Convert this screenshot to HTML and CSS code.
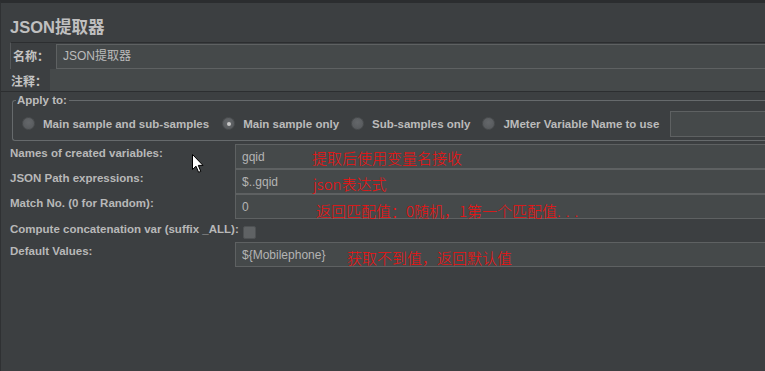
FILE: index.html
```html
<!DOCTYPE html>
<html>
<head>
<meta charset="utf-8">
<link rel="stylesheet" href="styles.css">
</head>
<body>
<div class="app">
  <h1 class="title">JSON提取器</h1>
  <div class="name-row">
    <span class="cjk-label">名称：</span>
    <div class="name-field">JSON提取器</div>
  </div>
  <div class="comment-row">
    <span class="cjk-label">注释：</span>
    <div class="comment-field"></div>
  </div>
  <fieldset class="apply">
    <legend>Apply to:</legend>
    <div class="radios">
      <label class="radio r1"><span class="dot"></span>Main sample and sub-samples</label>
      <label class="radio r2"><span class="dot on"></span>Main sample only</label>
      <label class="radio r3"><span class="dot"></span>Sub-samples only</label>
      <label class="radio r4"><span class="dot"></span>JMeter Variable Name to use</label>
      <div class="var-field"></div>
    </div>
  </fieldset>
  <div class="form">
    <div class="lbl">Names of created variables:</div>
    <div class="field"><span class="val v1">gqid</span><span class="note n1">提取后使用变量名接收</span></div>
    <div class="lbl">JSON Path expressions:</div>
    <div class="field"><span class="val v2">$..gqid</span><span class="note n2">json表达式</span></div>
    <div class="lbl">Match No. (0 for Random):</div>
    <div class="field"><span class="val v3">0</span><span class="note n3">返回匹配值：0随机，1第一个匹配值<span class="dots">...</span></span></div>
    <div class="check-row"><span class="lbl-inline">Compute concatenation var (suffix _ALL):</span><span class="checkbox"></span></div>
    <div class="lbl">Default Values:</div>
    <div class="field"><span class="val v5">${Mobilephone}</span><span class="note n5">获取不到值，返回默认值</span></div>
  </div>
  <svg class="cursor" width="13" height="20" viewBox="0 0 13 20">
    <path d="M0.5 0.5 L0.5 15.5 L4 12.2 L6.6 18.3 L8.8 17.4 L6.3 11.4 L11 11.4 Z" fill="#ffffff" stroke="#000000" stroke-width="1"/>
  </svg>
</div>
</body>
</html>
```

FILE: styles.css
```css
* { box-sizing: border-box; }
html, body { margin: 0; padding: 0; }
body {
  width: 765px;
  height: 371px;
  overflow: hidden;
  background: #3c3f41;
  font-family: "Liberation Sans", Arial, "Noto Sans CJK SC", sans-serif;
  color: #bbbbbb;
}
.app {
  position: relative;
  width: 765px;
  height: 371px;
  border-top: 3px solid #2b2d2f;
  border-left: 1px solid #2f3133;
}
.title {
  margin: 0;
  height: 39px;
  padding: 15px 0 0 9px;
  font-size: 16.5px;
  line-height: 18px;
  font-weight: bold;
  color: #c0c0c0;
}
.cjk-label {
  font-family: "Noto Sans CJK SC", sans-serif;
  font-size: 12px;
  font-weight: bold;
  line-height: 14px;
  color: #c4c4c4;
}
.name-row {
  display: flex;
  align-items: center;
  margin-left: 9px;
  height: 27px;
  border-top: 1px solid #2c2e30;
  border-left: 1px solid #55585a;
  padding-left: 2px;
}
.name-row .cjk-label { width: 43px; }
.name-field {
  flex: 1;
  height: 25px;
  background: #45494a;
  border: 1px solid #5e6162;
  border-right: none;
  padding-left: 6px;
  font-size: 12px;
  line-height: 23px;
  font-family: "Liberation Sans", Arial, "Noto Sans CJK SC", sans-serif;
}
.comment-row {
  display: flex;
  align-items: center;
  height: 23px;
  padding-left: 10px;
  border-bottom: 1px solid #2c2e30;
}
.comment-row .cjk-label { width: 39px; margin-top: 2px; }
.comment-field {
  flex: 1;
  height: 22px;
  background: #45494a;
}
.apply {
  margin: 1px 0 0 11px;
  padding: 0;
  height: 48px;
  border: 1px solid #666a6c;
  border-right: none;
  border-radius: 3px 0 0 3px;
}
.apply legend {
  margin-left: 3px;
  padding: 0 2px 0 1px;
  font-size: 11.5px;
  font-weight: bold;
  line-height: 14px;
  color: #bcbcbc;
}
.radios {
  display: flex;
  align-items: center;
  height: 33px;
  font-size: 11.5px;
  font-weight: bold;
}
.radio {
  display: flex;
  align-items: center;
  white-space: nowrap;
}
.dot {
  width: 13px;
  height: 13px;
  border-radius: 50%;
  background: radial-gradient(circle at 50% 40%, #64676a, #54575a);
  border: 1px solid #4a4d4f;
  margin-right: 8px;
  display: flex;
  align-items: center;
  justify-content: center;
}
.dot.on::after {
  content: "";
  width: 4px;
  height: 4px;
  border-radius: 50%;
  background: #c8c8c8;
}
.r1 { margin-left: 9px; }
.r2 { margin-left: 13px; }
.r3 { margin-left: 12px; }
.r4 { margin-left: 12px; }
.var-field {
  margin-left: 11px;
  flex: 1;
  height: 26px;
  background: #45494a;
  border: 1px solid #5e6162;
  border-right: none;
}
.form {
  display: grid;
  grid-template-columns: 225px 1fr;
  grid-auto-rows: auto;
  margin-top: 3px;
  padding-left: 9px;
}
.lbl, .lbl-inline {
  font-size: 11.5px;
  font-weight: bold;
  line-height: 14px;
  padding-top: 2px;
  color: #b8b8b8;
  white-space: nowrap;
}
.field {
  height: 25px;
  background: #45494a;
  border: 1px solid #5e6162;
  border-right: none;
  display: flex;
  align-items: center;
  font-size: 12px;
  color: #b4b4b4;
}
.val { padding-left: 6px; flex: none; }
.v1 { width: 76px; }
.v2 { width: 77px; }
.v3 { width: 80px; }
.v5 { width: 111px; }
.note {
  font-family: "Noto Sans CJK SC", sans-serif;
  font-size: 15px;
  font-weight: 300;
  line-height: 16px;
  color: #f21010;
  white-space: nowrap;
}
.n1 { margin-top: 3px; }
.n2 { margin-top: 4px; }
.n3 { margin-top: 8px; }
.n5 { margin-top: 6px; }
.dots { letter-spacing: 5px; }
.check-row {
  grid-column: 1 / 3;
  display: flex;
  align-items: center;
  height: 23px;
}
.lbl-inline { padding-top: 0; margin-top: -3px; }
.checkbox {
  width: 13px;
  height: 13px;
  margin-left: 4px;
  margin-top: 3px;
  border-radius: 2px;
  background: #5f6264;
  border: 1px solid #4e5153;
}
.cursor {
  position: absolute;
  left: 191px;
  top: 151px;
}
```
